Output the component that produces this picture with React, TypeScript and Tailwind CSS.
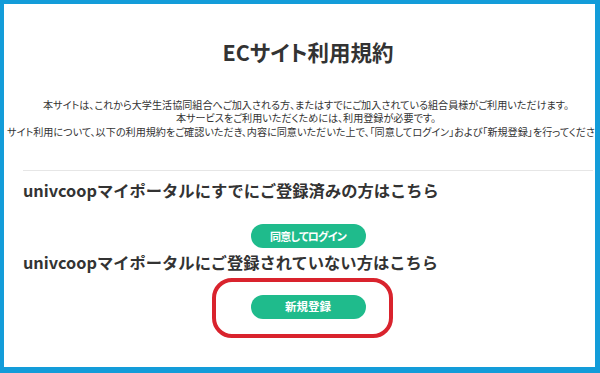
export default function App() {
  return (
    <div className="w-[600px] h-[373px] bg-[#139cd9] pt-[4px] pl-[4px] pr-[5px] pb-[6px]">
      <div
        className="relative w-full h-full bg-white overflow-hidden text-[#333]"
        style={{ fontFamily: '"Noto Sans CJK JP", "Noto Sans", sans-serif' }}
      >
        <div className="flex flex-col pl-[19px] pr-[2px]">
          <h1 className="mt-[32px] text-center text-[21.5px] leading-[32px] font-bold text-[#333] [font-feature-settings:'palt']">
            ECサイト利用規約
          </h1>

          <div className="mt-[30px] ml-[-16px] w-[598px] text-center text-[10.1px] leading-[13.3px] text-[#333] [font-feature-settings:'palt']">
            <p>本サイトは、これから大学生活協同組合へご加入される方、またはすでにご加入されている組合員様がご利用いただけます。</p>
            <p>本サービスをご利用いただくためには、利用登録が必要です。</p>
            <p className="whitespace-nowrap text-left">
              サイト利用について、以下の利用規約をご確認いただき、内容に同意いただいた上で、「同意してログイン」および「新規登録」を行ってください。
            </p>
          </div>

          <div className="mt-[32px] h-px bg-[#e6e6e6]" />

          <h2 className="mt-[7px] text-[16.3px] leading-[24px] font-bold text-[#333]">
            univcoopマイポータルにすでにご登録済みの方はこちら
          </h2>
          <div className="mt-[22px] flex justify-center">
            <button className="w-[115px] h-[24px] rounded-full bg-[#1fbb8c] text-white text-[11px] font-bold tracking-[-0.8px] [font-feature-settings:'palt']">
              同意してログイン
            </button>
          </div>

          <h2 className="mt-[2px] text-[16.3px] leading-[24px] font-bold text-[#333]">
            univcoopマイポータルにご登録されていない方はこちら
          </h2>
          <div className="mt-[21px] flex justify-center">
            <button className="w-[115px] h-[24px] rounded-full bg-[#1fbb8c] text-white text-[11.5px] font-bold [font-feature-settings:'palt']">
              新規登録
            </button>
          </div>
        </div>

        <div className="absolute left-[208px] top-[274px] w-[181px] h-[60px] border-[4px] border-[#d9232d] rounded-[20px]" />
      </div>
    </div>
  )
}
